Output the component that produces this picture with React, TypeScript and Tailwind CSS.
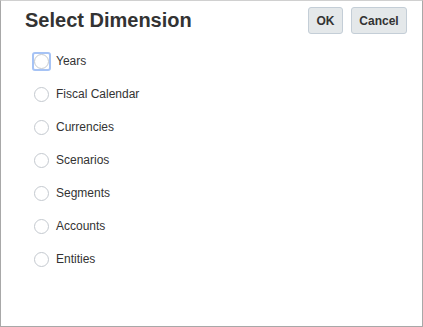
import React from "react";

const items = ["Years", "Fiscal Calendar", "Currencies", "Scenarios", "Segments", "Accounts", "Entities"];

export default function App() {
  return (
    <div
      className="w-[423px] h-[327px] bg-white border border-[#a8a8a8] border-t-[#d0d0d0] flex flex-col text-[#333333]"
      style={{ fontFamily: '"Liberation Sans", Arial, sans-serif' }}
    >
      <div className="flex items-start justify-between pl-[24px] pr-[15px] pt-[6px]">
        <h1 className="text-[20px] font-bold leading-[28px] mt-[-1px] text-[#333333]">Select Dimension</h1>
        <div className="flex gap-[8px]">
          <button className="h-[27px] w-[35px] rounded-[3px] border border-[#c4ced7] bg-[#e4e8ea] text-[12px] font-bold text-[#333333]">
            OK
          </button>
          <button className="h-[27px] w-[56px] rounded-[3px] border border-[#c4ced7] bg-[#e4e8ea] text-[12px] font-bold text-[#333333]">
            Cancel
          </button>
        </div>
      </div>
      <div className="flex flex-col pl-[31px] pt-[17px] gap-[13px]">
        {items.map((label, i) => (
          <div key={label} className="flex items-center h-[20px]">
            <div
              className={
                "w-[19px] h-[19px] flex items-center justify-center rounded-[3px] border-2 " +
                (i === 0 ? "border-[#a6c3f5] bg-white" : "border-transparent")
              }
            >
              <div className="w-[15px] h-[15px] shrink-0 rounded-full border border-[#c4c9cf] bg-white" />
            </div>
            <span className="ml-[5px] text-[12px] text-[#333333]">{label}</span>
          </div>
        ))}
      </div>
    </div>
  );
}
